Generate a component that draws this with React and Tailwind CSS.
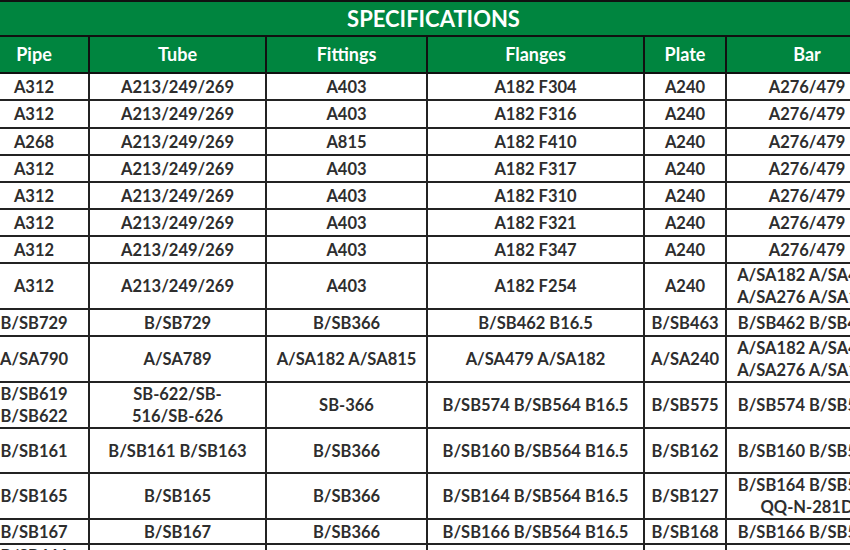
const rows = [
  { h: 'h-[27px]', c: ['A312', 'A213/249/269', 'A403', 'A182 F304', 'A240', 'A276/479'] },
  { h: 'h-[28px]', c: ['A312', 'A213/249/269', 'A403', 'A182 F316', 'A240', 'A276/479'] },
  { h: 'h-[27px]', c: ['A268', 'A213/249/269', 'A815', 'A182 F410', 'A240', 'A276/479'] },
  { h: 'h-[27px]', c: ['A312', 'A213/249/269', 'A403', 'A182 F317', 'A240', 'A276/479'] },
  { h: 'h-[27px]', c: ['A312', 'A213/249/269', 'A403', 'A182 F310', 'A240', 'A276/479'] },
  { h: 'h-[27px]', c: ['A312', 'A213/249/269', 'A403', 'A182 F321', 'A240', 'A276/479'] },
  { h: 'h-[27px]', c: ['A312', 'A213/249/269', 'A403', 'A182 F347', 'A240', 'A276/479'] },
  { h: 'h-[45px]', c: ['A312', 'A213/249/269', 'A403', 'A182 F254', 'A240', ['A/SA182 A/SA479', 'A/SA276 A/SA193']] },
  { h: 'h-[27px]', c: ['B/SB729', 'B/SB729', 'B/SB366', 'B/SB462 B16.5', 'B/SB463', 'B/SB462 B/SB473'] },
  { h: 'h-[46px]', c: ['A/SA790', 'A/SA789', 'A/SA182 A/SA815', 'A/SA479 A/SA182', 'A/SA240', ['A/SA182 A/SA479', 'A/SA276 A/SA193']] },
  { h: 'h-[45px]', c: ['B/SB619 B/SB622', ['SB-622/SB-', '516/SB-626'], 'SB-366', 'B/SB574 B/SB564 B16.5', 'B/SB575', 'B/SB574 B/SB564'] },
  { h: 'h-[45px]', c: ['B/SB161', 'B/SB161 B/SB163', 'B/SB366', 'B/SB160 B/SB564 B16.5', 'B/SB162', 'B/SB160 B/SB564'] },
  { h: 'h-[46px]', c: ['B/SB165', 'B/SB165', 'B/SB366', 'B/SB164 B/SB564 B16.5', 'B/SB127', ['B/SB164 B/SB564', 'QQ-N-281D']] },
  { h: 'h-[25px]', c: ['B/SB167', 'B/SB167', 'B/SB366', 'B/SB166 B/SB564 B16.5', 'B/SB168', 'B/SB166 B/SB564'] },
  { h: 'h-[45px]', c: ['B/SB444 B/SB446', 'B/SB444', 'B/SB366', 'B/SB443 B/SB564 B16.5', 'B/SB443', 'B/SB443 B/SB564'] },
]

const headers = ['Pipe', 'Tube', 'Fittings', 'Flanges', 'Plate', 'Bar']

const Cell = ({ value }) => (
  <td className="border-2 border-[#232323] px-1 text-center align-middle leading-[22px]">
    {Array.isArray(value)
      ? value.map((line, i) => (
          <span key={i} className="block whitespace-nowrap">
            {line}
          </span>
        ))
      : value}
  </td>
)

const App = () => {
  return (
    <div className="w-[850px] h-[550px] overflow-hidden bg-white" style={{ fontFamily: 'Lato, "Open Sans", sans-serif' }}>
      <table className="-ml-[22px] w-[909px] table-fixed border-collapse text-[16.5px] font-bold text-[#2e2e2e]">
        <colgroup>
          <col className="w-[110px]" />
          <col className="w-[177px]" />
          <col className="w-[161px]" />
          <col className="w-[217px]" />
          <col className="w-[82px]" />
          <col className="w-[162px]" />
        </colgroup>
        <thead>
          <tr className="h-[34px]">
            <th colSpan={6} className="border-2 border-[#111] bg-[#00853f] text-center text-[22px] text-white">
              SPECIFICATIONS
            </th>
          </tr>
          <tr className="h-[37px]">
            {headers.map((h) => (
              <th key={h} className="border-2 border-[#111] bg-[#00853f] text-center text-[18px] text-white">
                {h}
              </th>
            ))}
          </tr>
        </thead>
        <tbody>
          {rows.map((r, i) => (
            <tr key={i} className={r.h}>
              {r.c.map((v, j) => (
                <Cell key={j} value={v} />
              ))}
            </tr>
          ))}
        </tbody>
      </table>
    </div>
  )
}

export default App
